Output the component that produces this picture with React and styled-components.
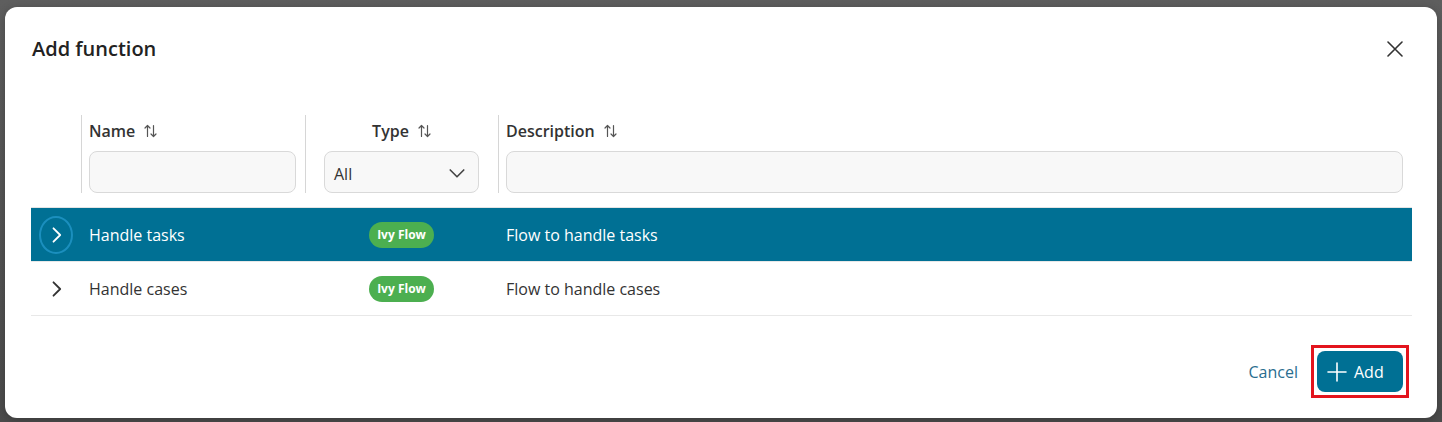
import React, { useState } from 'react';
import styled, { createGlobalStyle } from 'styled-components';

const GlobalStyle = createGlobalStyle`
  html, body {
    margin: 0;
    padding: 0;
    background: #545454;
    font-family: "Open Sans", "Noto Sans", Arial, sans-serif;
  }
`;

const Backdrop = styled.div`
  width: 1442px;
  height: 422px;
  box-sizing: border-box;
  padding: 7px 5px 4px 5px;
  background: linear-gradient(#5e5e5e, #4c4c4c);
`;

const Dialog = styled.div`
  height: 411px;
  box-sizing: border-box;
  background: #ffffff;
  border-radius: 12px;
  box-shadow: 0 2px 10px rgba(0, 0, 0, 0.25);
  display: flex;
  flex-direction: column;
`;

const Header = styled.div`
  display: flex;
  align-items: center;
  justify-content: space-between;
  padding: 28px 34px 0 27px;
  height: 28px;
`;

const Title = styled.h2`
  margin: 0;
  font-size: 20px;
  line-height: 28px;
  font-weight: 600;
  color: #222;
`;

const CloseButton = styled.button`
  border: none;
  background: none;
  padding: 0;
  width: 16px;
  height: 16px;
  display: flex;
  align-items: center;
  justify-content: center;
  color: #333;
  cursor: pointer;
`;

const Table = styled.div`
  margin: 52px 25px 0 26px;
`;

const columns = '50px 224px 193px 1fr';

const HeaderRow = styled.div`
  display: grid;
  grid-template-columns: ${columns};
  padding-bottom: 14px;
  border-bottom: 1px solid #e4e4e4;
`;

const HeaderCell = styled.div`
  border-left: 1px solid #d6d6d6;
  padding: ${p => (p.$center ? '4px 19px 0 18px' : '4px 9px 0 7px')};
  display: flex;
  flex-direction: column;
  align-items: ${p => (p.$center ? 'center' : 'stretch')};
`;

const Spacer = styled.div``;

const ColumnTitle = styled.div`
  display: flex;
  align-items: center;
  gap: 9px;
  height: 24px;
  font-size: 16px;
  font-weight: 600;
  color: #333;
  margin-bottom: 8px;
`;

const FilterInput = styled.input`
  box-sizing: border-box;
  width: 100%;
  height: 42px;
  border: 1px solid #d9d9d9;
  border-radius: 8px;
  background: #f8f8f8;
  font-family: inherit;
  font-size: 16px;
  padding: 0 12px;
  outline: none;
`;

const SelectBox = styled.div`
  box-sizing: border-box;
  width: 100%;
  height: 42px;
  border: 1px solid #d9d9d9;
  border-radius: 8px;
  background: #f8f8f8;
  display: flex;
  align-items: flex-end;
  justify-content: space-between;
  padding: 0 12px 7px 9px;
  font-size: 16px;
  color: #333;

  svg {
    margin-bottom: 3px;
  }
`;

const Row = styled.div`
  display: grid;
  grid-template-columns: ${columns};
  align-items: center;
  height: 53px;
  border-bottom: 1px solid #e8e8e8;
  background: ${p => (p.$selected ? '#007094' : 'transparent')};
  color: ${p => (p.$selected ? '#ffffff' : '#333333')};
  font-size: 16px;
  cursor: pointer;
`;

const Cell = styled.div`
  padding: 0 8px;
  display: flex;
  align-items: center;
  justify-content: ${p => (p.$center ? 'center' : 'flex-start')};
`;

const ExpandButton = styled.button`
  box-sizing: border-box;
  width: 38px;
  height: 38px;
  border-radius: 50%;
  border: 2px solid ${p => (p.$focused ? '#1b8fbe' : 'transparent')};
  background: none;
  padding: 0;
  display: flex;
  align-items: center;
  justify-content: center;
  color: inherit;
  cursor: pointer;
`;

const Badge = styled.span`
  display: inline-flex;
  align-items: center;
  height: 26px;
  padding: 0 8px;
  border-radius: 13px;
  background: #4caf50;
  color: #fff;
  font-size: 12px;
  font-weight: 700;
`;

const Footer = styled.div`
  margin-top: auto;
  display: flex;
  justify-content: flex-end;
  align-items: center;
  gap: 19px;
  padding: 0 34px 26px 0;
`;

const CancelButton = styled.button`
  border: none;
  background: none;
  padding: 0;
  font-family: inherit;
  font-size: 16px;
  color: #2a6e8f;
  cursor: pointer;
`;

const Highlight = styled.div`
  outline: 3px solid #e3141d;
  outline-offset: 3px;
  border-radius: 0;
  display: flex;
`;

const AddButton = styled.button`
  height: 41px;
  width: 86px;
  border: none;
  border-radius: 8px;
  background: #007094;
  color: #fff;
  font-family: inherit;
  font-size: 16px;
  display: flex;
  align-items: center;
  gap: 7px;
  padding: 0 0 0 10px;
  cursor: pointer;
`;

const SortIcon = () => (
  <svg width="13" height="14" viewBox="0 0 13 14" fill="none" stroke="#555" strokeWidth="1.2" strokeLinecap="round" strokeLinejoin="round">
    <path d="M3.5 12.5V1.5M1 4L3.5 1.5L6 4" />
    <path d="M9.5 1.5V12.5M7 10L9.5 12.5L12 10" />
  </svg>
);

const ChevronRight = () => (
  <svg width="20" height="20" viewBox="0 0 24 24" fill="none" stroke="currentColor" strokeWidth="2.2" strokeLinecap="round" strokeLinejoin="round">
    <path d="M9 4l8 8-8 8" />
  </svg>
);

const ChevronDown = () => (
  <svg width="18" height="18" viewBox="0 0 24 24" fill="none" stroke="#444" strokeWidth="2.2" strokeLinecap="round" strokeLinejoin="round">
    <path d="M3 8l9 9 9-9" />
  </svg>
);

const CloseIcon = () => (
  <svg width="16" height="16" viewBox="0 0 16 16" fill="none" stroke="#333" strokeWidth="1.6" strokeLinecap="round">
    <path d="M1 1l14 14M15 1L1 15" />
  </svg>
);

const PlusIcon = () => (
  <svg width="20" height="20" viewBox="0 0 20 20" fill="none" stroke="#fff" strokeWidth="1.6" strokeLinecap="round">
    <path d="M10 1v18M1 10h18" />
  </svg>
);

const functions = [
  { name: 'Handle tasks', type: 'Ivy Flow', description: 'Flow to handle tasks' },
  { name: 'Handle cases', type: 'Ivy Flow', description: 'Flow to handle cases' },
];

export default function App() {
  const [selected, setSelected] = useState(0);

  return (
    <>
      <GlobalStyle />
      <Backdrop>
        <Dialog>
          <Header>
            <Title>Add function</Title>
            <CloseButton aria-label="Close"><CloseIcon /></CloseButton>
          </Header>

          <Table>
            <HeaderRow>
              <Spacer />
              <HeaderCell>
                <ColumnTitle>Name <SortIcon /></ColumnTitle>
                <FilterInput />
              </HeaderCell>
              <HeaderCell $center>
                <ColumnTitle>Type <SortIcon /></ColumnTitle>
                <SelectBox>All <ChevronDown /></SelectBox>
              </HeaderCell>
              <HeaderCell>
                <ColumnTitle>Description <SortIcon /></ColumnTitle>
                <FilterInput />
              </HeaderCell>
            </HeaderRow>

            {functions.map((fn, i) => (
              <Row key={fn.name} $selected={selected === i} onClick={() => setSelected(i)}>
                <Cell>
                  <ExpandButton $focused={selected === i}><ChevronRight /></ExpandButton>
                </Cell>
                <Cell>{fn.name}</Cell>
                <Cell $center><Badge>{fn.type}</Badge></Cell>
                <Cell>{fn.description}</Cell>
              </Row>
            ))}
          </Table>

          <Footer>
            <CancelButton>Cancel</CancelButton>
            <Highlight>
              <AddButton><PlusIcon /> Add</AddButton>
            </Highlight>
          </Footer>
        </Dialog>
      </Backdrop>
    </>
  );
}
